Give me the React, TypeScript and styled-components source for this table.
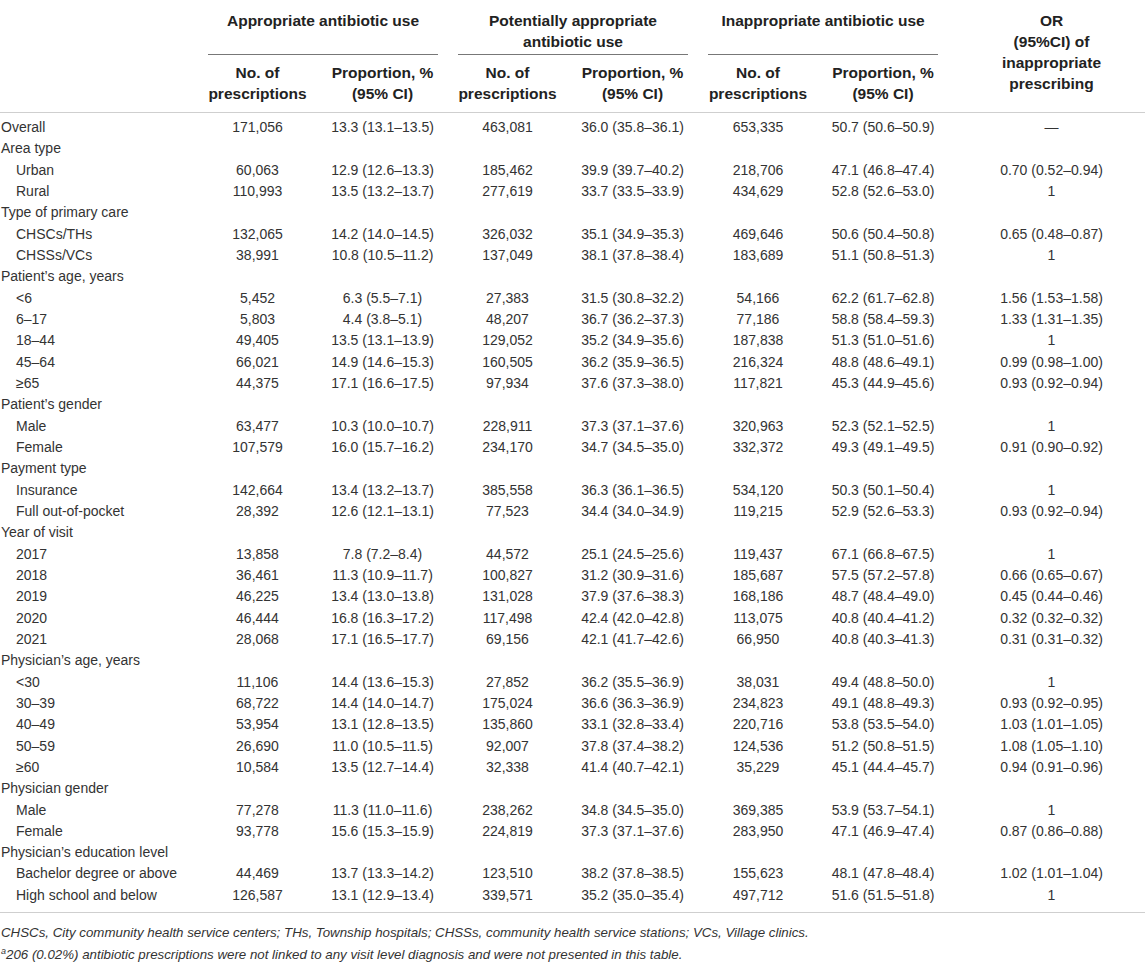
import React from "react";
import styled, { createGlobalStyle } from "styled-components";

const GlobalStyle = createGlobalStyle`
  html, body { margin: 0; padding: 0; background: #ffffff; }
  body { font-family: "Liberation Sans", Arial, Helvetica, sans-serif; color: #333333; }
`;

const COLS = "198px 119px 131px 119px 131px 120px 130px 197px";

const Page = styled.div`
  width: 1145px;
  font-size: 14px;
`;

const Header = styled.div`
  display: grid;
  grid-template-columns: ${COLS};
  grid-template-rows: 55px 57px;
  border-bottom: 1.5px solid #cfcfcf;
  box-sizing: border-box;
  height: 113px;
  font-size: 15.5px;
  font-weight: bold;
  color: #222222;
`;

const GroupTitle = styled.div<{ $col: number }>`
  grid-column: ${(p) => p.$col} / span 2;
  grid-row: 1;
  margin: 0 10px;
  padding-top: 10px;
  border-bottom: 1.5px solid #777777;
  text-align: center;
  line-height: 21px;
`;

const SubHead = styled.div<{ $col: number }>`
  grid-column: ${(p) => p.$col};
  grid-row: 2;
  padding: 7px 4px 0;
  text-align: center;
  line-height: 21px;
`;

const OrHead = styled.div`
  grid-column: 8;
  grid-row: 1 / span 2;
  padding: 10px 0 0 10px;
  text-align: center;
  line-height: 21px;
`;

const Body = styled.div`
  padding: 4px 0 6px;
  border-bottom: 1.5px solid #cfcfcf;
`;

const Row = styled.div`
  display: grid;
  grid-template-columns: ${COLS};
  height: 21.33px;
  line-height: 21.33px;
  white-space: nowrap;
`;

const Label = styled.div<{ $indent?: boolean }>`
  padding-left: ${(p) => (p.$indent ? "16px" : "1px")};
`;

const Cell = styled.div<{ $last?: boolean }>`
  text-align: center;
  padding: ${(p) => (p.$last ? "0 0 0 10px" : "0 10px")};
`;

const Notes = styled.div`
  padding: 9px 0 0 1px;
  font-size: 13.3px;
  font-style: italic;
  line-height: 22px;
  color: #333333;
`;

const Sup = styled.sup`
  font-size: 9px;
  vertical-align: 5px;
  line-height: 0;
`;

type R = { label: string; kind: "top" | "section" | "item"; v?: string[] };

const rows: R[] = [
  { label: "Overall", kind: "top", v: ["171,056", "13.3 (13.1–13.5)", "463,081", "36.0 (35.8–36.1)", "653,335", "50.7 (50.6–50.9)", "—"] },
  { label: "Area type", kind: "section" },
  { label: "Urban", kind: "item", v: ["60,063", "12.9 (12.6–13.3)", "185,462", "39.9 (39.7–40.2)", "218,706", "47.1 (46.8–47.4)", "0.70 (0.52–0.94)"] },
  { label: "Rural", kind: "item", v: ["110,993", "13.5 (13.2–13.7)", "277,619", "33.7 (33.5–33.9)", "434,629", "52.8 (52.6–53.0)", "1"] },
  { label: "Type of primary care", kind: "section" },
  { label: "CHSCs/THs", kind: "item", v: ["132,065", "14.2 (14.0–14.5)", "326,032", "35.1 (34.9–35.3)", "469,646", "50.6 (50.4–50.8)", "0.65 (0.48–0.87)"] },
  { label: "CHSSs/VCs", kind: "item", v: ["38,991", "10.8 (10.5–11.2)", "137,049", "38.1 (37.8–38.4)", "183,689", "51.1 (50.8–51.3)", "1"] },
  { label: "Patient’s age, years", kind: "section" },
  { label: "<6", kind: "item", v: ["5,452", "6.3 (5.5–7.1)", "27,383", "31.5 (30.8–32.2)", "54,166", "62.2 (61.7–62.8)", "1.56 (1.53–1.58)"] },
  { label: "6–17", kind: "item", v: ["5,803", "4.4 (3.8–5.1)", "48,207", "36.7 (36.2–37.3)", "77,186", "58.8 (58.4–59.3)", "1.33 (1.31–1.35)"] },
  { label: "18–44", kind: "item", v: ["49,405", "13.5 (13.1–13.9)", "129,052", "35.2 (34.9–35.6)", "187,838", "51.3 (51.0–51.6)", "1"] },
  { label: "45–64", kind: "item", v: ["66,021", "14.9 (14.6–15.3)", "160,505", "36.2 (35.9–36.5)", "216,324", "48.8 (48.6–49.1)", "0.99 (0.98–1.00)"] },
  { label: "≥65", kind: "item", v: ["44,375", "17.1 (16.6–17.5)", "97,934", "37.6 (37.3–38.0)", "117,821", "45.3 (44.9–45.6)", "0.93 (0.92–0.94)"] },
  { label: "Patient’s gender", kind: "section" },
  { label: "Male", kind: "item", v: ["63,477", "10.3 (10.0–10.7)", "228,911", "37.3 (37.1–37.6)", "320,963", "52.3 (52.1–52.5)", "1"] },
  { label: "Female", kind: "item", v: ["107,579", "16.0 (15.7–16.2)", "234,170", "34.7 (34.5–35.0)", "332,372", "49.3 (49.1–49.5)", "0.91 (0.90–0.92)"] },
  { label: "Payment type", kind: "section" },
  { label: "Insurance", kind: "item", v: ["142,664", "13.4 (13.2–13.7)", "385,558", "36.3 (36.1–36.5)", "534,120", "50.3 (50.1–50.4)", "1"] },
  { label: "Full out-of-pocket", kind: "item", v: ["28,392", "12.6 (12.1–13.1)", "77,523", "34.4 (34.0–34.9)", "119,215", "52.9 (52.6–53.3)", "0.93 (0.92–0.94)"] },
  { label: "Year of visit", kind: "section" },
  { label: "2017", kind: "item", v: ["13,858", "7.8 (7.2–8.4)", "44,572", "25.1 (24.5–25.6)", "119,437", "67.1 (66.8–67.5)", "1"] },
  { label: "2018", kind: "item", v: ["36,461", "11.3 (10.9–11.7)", "100,827", "31.2 (30.9–31.6)", "185,687", "57.5 (57.2–57.8)", "0.66 (0.65–0.67)"] },
  { label: "2019", kind: "item", v: ["46,225", "13.4 (13.0–13.8)", "131,028", "37.9 (37.6–38.3)", "168,186", "48.7 (48.4–49.0)", "0.45 (0.44–0.46)"] },
  { label: "2020", kind: "item", v: ["46,444", "16.8 (16.3–17.2)", "117,498", "42.4 (42.0–42.8)", "113,075", "40.8 (40.4–41.2)", "0.32 (0.32–0.32)"] },
  { label: "2021", kind: "item", v: ["28,068", "17.1 (16.5–17.7)", "69,156", "42.1 (41.7–42.6)", "66,950", "40.8 (40.3–41.3)", "0.31 (0.31–0.32)"] },
  { label: "Physician’s age, years", kind: "section" },
  { label: "<30", kind: "item", v: ["11,106", "14.4 (13.6–15.3)", "27,852", "36.2 (35.5–36.9)", "38,031", "49.4 (48.8–50.0)", "1"] },
  { label: "30–39", kind: "item", v: ["68,722", "14.4 (14.0–14.7)", "175,024", "36.6 (36.3–36.9)", "234,823", "49.1 (48.8–49.3)", "0.93 (0.92–0.95)"] },
  { label: "40–49", kind: "item", v: ["53,954", "13.1 (12.8–13.5)", "135,860", "33.1 (32.8–33.4)", "220,716", "53.8 (53.5–54.0)", "1.03 (1.01–1.05)"] },
  { label: "50–59", kind: "item", v: ["26,690", "11.0 (10.5–11.5)", "92,007", "37.8 (37.4–38.2)", "124,536", "51.2 (50.8–51.5)", "1.08 (1.05–1.10)"] },
  { label: "≥60", kind: "item", v: ["10,584", "13.5 (12.7–14.4)", "32,338", "41.4 (40.7–42.1)", "35,229", "45.1 (44.4–45.7)", "0.94 (0.91–0.96)"] },
  { label: "Physician gender", kind: "section" },
  { label: "Male", kind: "item", v: ["77,278", "11.3 (11.0–11.6)", "238,262", "34.8 (34.5–35.0)", "369,385", "53.9 (53.7–54.1)", "1"] },
  { label: "Female", kind: "item", v: ["93,778", "15.6 (15.3–15.9)", "224,819", "37.3 (37.1–37.6)", "283,950", "47.1 (46.9–47.4)", "0.87 (0.86–0.88)"] },
  { label: "Physician’s education level", kind: "section" },
  { label: "Bachelor degree or above", kind: "item", v: ["44,469", "13.7 (13.3–14.2)", "123,510", "38.2 (37.8–38.5)", "155,623", "48.1 (47.8–48.4)", "1.02 (1.01–1.04)"] },
  { label: "High school and below", kind: "item", v: ["126,587", "13.1 (12.9–13.4)", "339,571", "35.2 (35.0–35.4)", "497,712", "51.6 (51.5–51.8)", "1"] },
];

const groups = [
  { col: 2, title: "Appropriate antibiotic use" },
  { col: 4, title: <>Potentially appropriate<br />antibiotic use</> },
  { col: 6, title: "Inappropriate antibiotic use" },
];

export default function App() {
  return (
    <Page>
      <GlobalStyle />
      <Header>
        {groups.map((g) => (
          <React.Fragment key={g.col}>
            <GroupTitle $col={g.col}>{g.title}</GroupTitle>
            <SubHead $col={g.col}>No. of<br />prescriptions</SubHead>
            <SubHead $col={g.col + 1}>Proportion, %<br />(95% CI)</SubHead>
          </React.Fragment>
        ))}
        <OrHead>OR<br />(95%CI) of<br />inappropriate<br />prescribing</OrHead>
      </Header>
      <Body>
        {rows.map((r, i) => (
          <Row key={i}>
            <Label $indent={r.kind === "item"}>{r.label}</Label>
            {r.v && r.v.map((val, j) => (
              <Cell key={j} $last={j === 6}>{val}</Cell>
            ))}
          </Row>
        ))}
      </Body>
      <Notes>
        <div>CHSCs, City community health service centers; THs, Township hospitals; CHSSs, community health service stations; VCs, Village clinics.</div>
        <div><Sup>a</Sup>206 (0.02%) antibiotic prescriptions were not linked to any visit level diagnosis and were not presented in this table.</div>
      </Notes>
    </Page>
  );
}
